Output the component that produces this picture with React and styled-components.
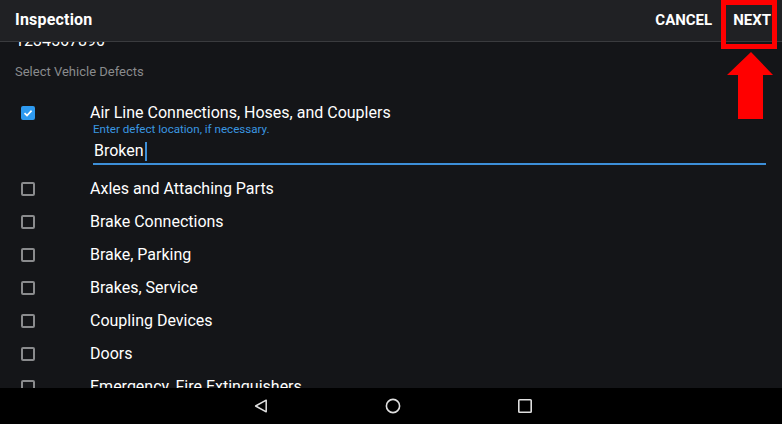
import React from 'react';
import styled, { createGlobalStyle } from 'styled-components';

const Global = createGlobalStyle`
  html, body { margin: 0; padding: 0; background: #141518; }
  body { font-family: Roboto, "Noto Sans", "Liberation Sans", sans-serif; }
  * { box-sizing: border-box; }
`;

const Screen = styled.div`
  position: relative;
  width: 782px;
  height: 424px;
  display: flex;
  flex-direction: column;
  background: #141518;
  overflow: hidden;
`;

const Header = styled.header`
  flex: 0 0 42px;
  display: flex;
  align-items: center;
  padding: 0 5px 2px 15px;
  background: #202124;
  border-bottom: 1px solid #3a3b3e;
`;

const Title = styled.h1`
  margin: 0;
  flex: 1;
  font-size: 16px;
  font-weight: 700;
  color: #ffffff;
  letter-spacing: 0.2px;
`;

const Actions = styled.div`
  display: flex;
  align-items: center;
  gap: 9px;
`;

const ActionButton = styled.button`
  background: none;
  border: none;
  padding: 0 6px;
  height: 32px;
  font-family: inherit;
  font-size: 15px;
  font-weight: 700;
  color: #ffffff;
  letter-spacing: 0;
`;

const Content = styled.main`
  flex: 1;
  overflow: hidden;
  display: flex;
  flex-direction: column;
`;

const VinText = styled.div`
  margin-top: -11px;
  padding-left: 15px;
  font-size: 16px;
  line-height: 20px;
  color: #ffffff;
`;

const SectionLabel = styled.div`
  padding: 13px 15px 12px;
  font-size: 13px;
  line-height: 16px;
  color: #8a8b8d;
`;

const List = styled.ul`
  list-style: none;
  margin: 0;
  padding: 4px 0 0;
`;

const Row = styled.li`
  display: grid;
  grid-template-columns: 14px 1fr;
  column-gap: 55px;
  padding: ${(p) => (p.$expanded ? '7px 16px 7px 21px' : '0 16px 0 21px')};
  height: ${(p) => (p.$expanded ? 'auto' : '33px')};
  align-items: ${(p) => (p.$expanded ? 'start' : 'center')};
  flex-shrink: 0;
`;

const Box = styled.span`
  width: 14px;
  height: 14px;
  margin-top: ${(p) => (p.$checked ? '3px' : '0')};
  border-radius: 2px;
  border: 2px solid ${(p) => (p.$checked ? '#2e9af0' : '#8a8b8d')};
  background: ${(p) => (p.$checked ? '#2e9af0' : 'transparent')};
  display: flex;
  align-items: center;
  justify-content: center;
`;

const Body = styled.div`
  display: flex;
  flex-direction: column;
`;

const Label = styled.span`
  font-size: 16px;
  line-height: 20px;
  color: #ffffff;
  white-space: nowrap;
`;

const Hint = styled.span`
  margin-left: 3px;
  font-size: 11.6px;
  line-height: 13px;
  color: #3a97e0;
`;

const Field = styled.div`
  margin-left: 3px;
  padding: 5px 0 2px 1px;
  border-bottom: 2px solid #3d8fd8;
  font-size: 16px;
  line-height: 20px;
  color: #ffffff;
  display: flex;
  align-items: center;
`;

const Caret = styled.span`
  display: inline-block;
  width: 2px;
  height: 19px;
  margin-left: 1px;
  background: #3d8fd8;
`;

const NavBar = styled.nav`
  flex: 0 0 36px;
  background: #000000;
  display: flex;
  align-items: center;
  justify-content: center;
  padding-left: 4px;
  gap: 116px;
`;

const NavIcon = styled.svg`
  width: 16px;
  height: 16px;
  display: block;
`;

const Highlight = styled.div`
  position: absolute;
  left: 721px;
  top: 0;
  width: 56px;
  height: 49px;
  border: 5px solid #ff0000;
  pointer-events: none;
`;

const Arrow = styled.svg`
  position: absolute;
  left: 727px;
  top: 52px;
  width: 46px;
  height: 67px;
`;

const items = [
  'Axles and Attaching Parts',
  'Brake Connections',
  'Brake, Parking',
  'Brakes, Service',
  'Coupling Devices',
  'Doors',
  'Emergency, Fire Extinguishers',
  'Exhaust System',
];

function CheckBox({ checked }) {
  return (
    <Box $checked={checked}>
      {checked && (
        <svg width="10" height="10" viewBox="0 0 10 10">
          <path d="M1.5 5.2 L4 7.5 L8.6 2.6" fill="none" stroke="#ffffff" strokeWidth="1.7" />
        </svg>
      )}
    </Box>
  );
}

export default function App() {
  return (
    <>
      <Global />
      <Screen>
        <Header>
          <Title>Inspection</Title>
          <Actions>
            <ActionButton>CANCEL</ActionButton>
            <ActionButton>NEXT</ActionButton>
          </Actions>
        </Header>
        <Content>
          <VinText>1234567890</VinText>
          <SectionLabel>Select Vehicle Defects</SectionLabel>
          <List>
            <Row $expanded>
              <CheckBox checked />
              <Body>
                <Label>Air Line Connections, Hoses, and Couplers</Label>
                <Hint>Enter defect location, if necessary.</Hint>
                <Field>
                  Broken
                  <Caret />
                </Field>
              </Body>
            </Row>
            {items.map((t) => (
              <Row key={t}>
                <CheckBox />
                <Label>{t}</Label>
              </Row>
            ))}
          </List>
        </Content>
        <NavBar>
          <NavIcon viewBox="0 0 16 16">
            <path d="M13.2 2.2 L13.2 13.8 L2.6 8 Z" fill="none" stroke="#e0e0e0" strokeWidth="1.5" strokeLinejoin="round" />
          </NavIcon>
          <NavIcon viewBox="0 0 16 16">
            <circle cx="8" cy="8" r="6.6" fill="none" stroke="#e0e0e0" strokeWidth="1.6" />
          </NavIcon>
          <NavIcon viewBox="0 0 16 16">
            <rect x="1.8" y="1.8" width="12.4" height="12.4" rx="0.8" fill="none" stroke="#e0e0e0" strokeWidth="1.6" />
          </NavIcon>
        </NavBar>
        <Highlight />
        <Arrow viewBox="0 0 46 67">
          <polygon points="24,0 46,23 36,23 36,67 11,67 11,23 0,23" fill="#ff0000" />
        </Arrow>
      </Screen>
    </>
  );
}
